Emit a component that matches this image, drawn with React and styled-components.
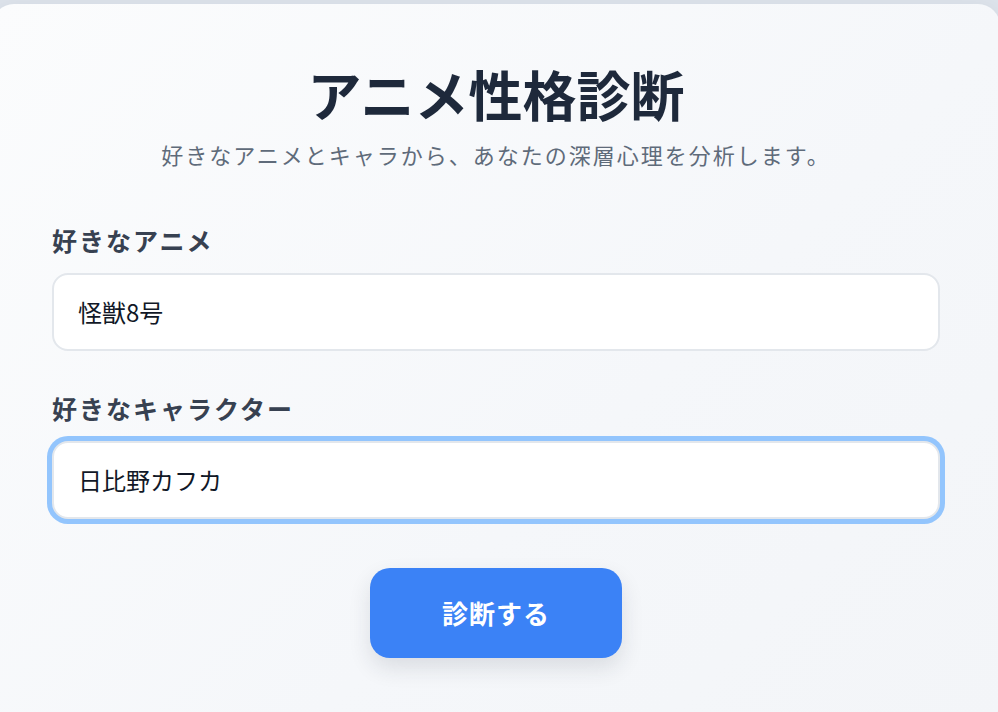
import styled, { createGlobalStyle } from "styled-components";

const GlobalStyle = createGlobalStyle`
  html, body {
    margin: 0;
    padding: 0;
    background: #dde3eb;
    overflow: hidden;
  }
  body {
    font-family: "Noto Sans CJK JP", "Noto Sans", sans-serif;
  }
`;

const Page = styled.div`
  padding-top: 4px;
  height: 712px;
  box-sizing: border-box;
`;

const Card = styled.div`
  margin-left: -8px;
  width: 1008px;
  height: 720px;
  box-sizing: border-box;
  padding: 58px 60px 0;
  border-radius: 22px;
  background: linear-gradient(135deg, #fbfcfd 0%, #f5f7fa 60%, #f3f5f8 100%);
  box-shadow: 0 4px 24px rgba(30, 41, 59, 0.06);
`;

const Title = styled.h1`
  margin: 0;
  text-align: center;
  font-size: 54px;
  line-height: 1.2;
  font-weight: 700;
  color: #1e293b;
`;

const Subtitle = styled.p`
  margin: 11px 0 0;
  text-align: center;
  font-size: 22px;
  letter-spacing: 2px;
  line-height: 1.5;
  color: #5f6b7a;
`;

const Form = styled.form`
  margin-top: 52px;
  display: flex;
  flex-direction: column;
`;

const Field = styled.div`
  display: flex;
  flex-direction: column;
  gap: 15px;
  & + & {
    margin-top: 40px;
  }
`;

const Label = styled.label`
  font-size: 25px;
  letter-spacing: 2px;
  line-height: 1.4;
  font-weight: 700;
  color: #374151;
`;

const Input = styled.input`
  height: 78px;
  box-sizing: border-box;
  padding: 0 24px;
  border: 2px solid #e3e7ec;
  border-radius: 16px;
  background: #ffffff;
  font-family: inherit;
  font-size: 24px;
  color: #111827;
  outline: none;
  box-shadow: ${(p) => (p.$focused ? "0 0 0 5px #93c5fd" : "none")};
`;

const Actions = styled.div`
  display: flex;
  justify-content: center;
  margin-top: 49px;
`;

const Button = styled.button`
  width: 252px;
  height: 90px;
  border: none;
  border-radius: 20px;
  background: #3b82f6;
  color: #ffffff;
  font-family: inherit;
  font-size: 26px;
  letter-spacing: 1px;
  font-weight: 700;
  box-shadow: 0 10px 22px rgba(30, 41, 59, 0.12);
  cursor: pointer;
`;

export default function App() {
  return (
    <Page>
      <GlobalStyle />
      <Card>
        <Title>アニメ性格診断</Title>
        <Subtitle>好きなアニメとキャラから、あなたの深層心理を分析します。</Subtitle>
        <Form onSubmit={(e) => e.preventDefault()}>
          <Field>
            <Label>好きなアニメ</Label>
            <Input defaultValue="怪獣8号" />
          </Field>
          <Field>
            <Label>好きなキャラクター</Label>
            <Input $focused defaultValue="日比野カフカ" />
          </Field>
          <Actions>
            <Button type="submit">診断する</Button>
          </Actions>
        </Form>
      </Card>
    </Page>
  );
}
